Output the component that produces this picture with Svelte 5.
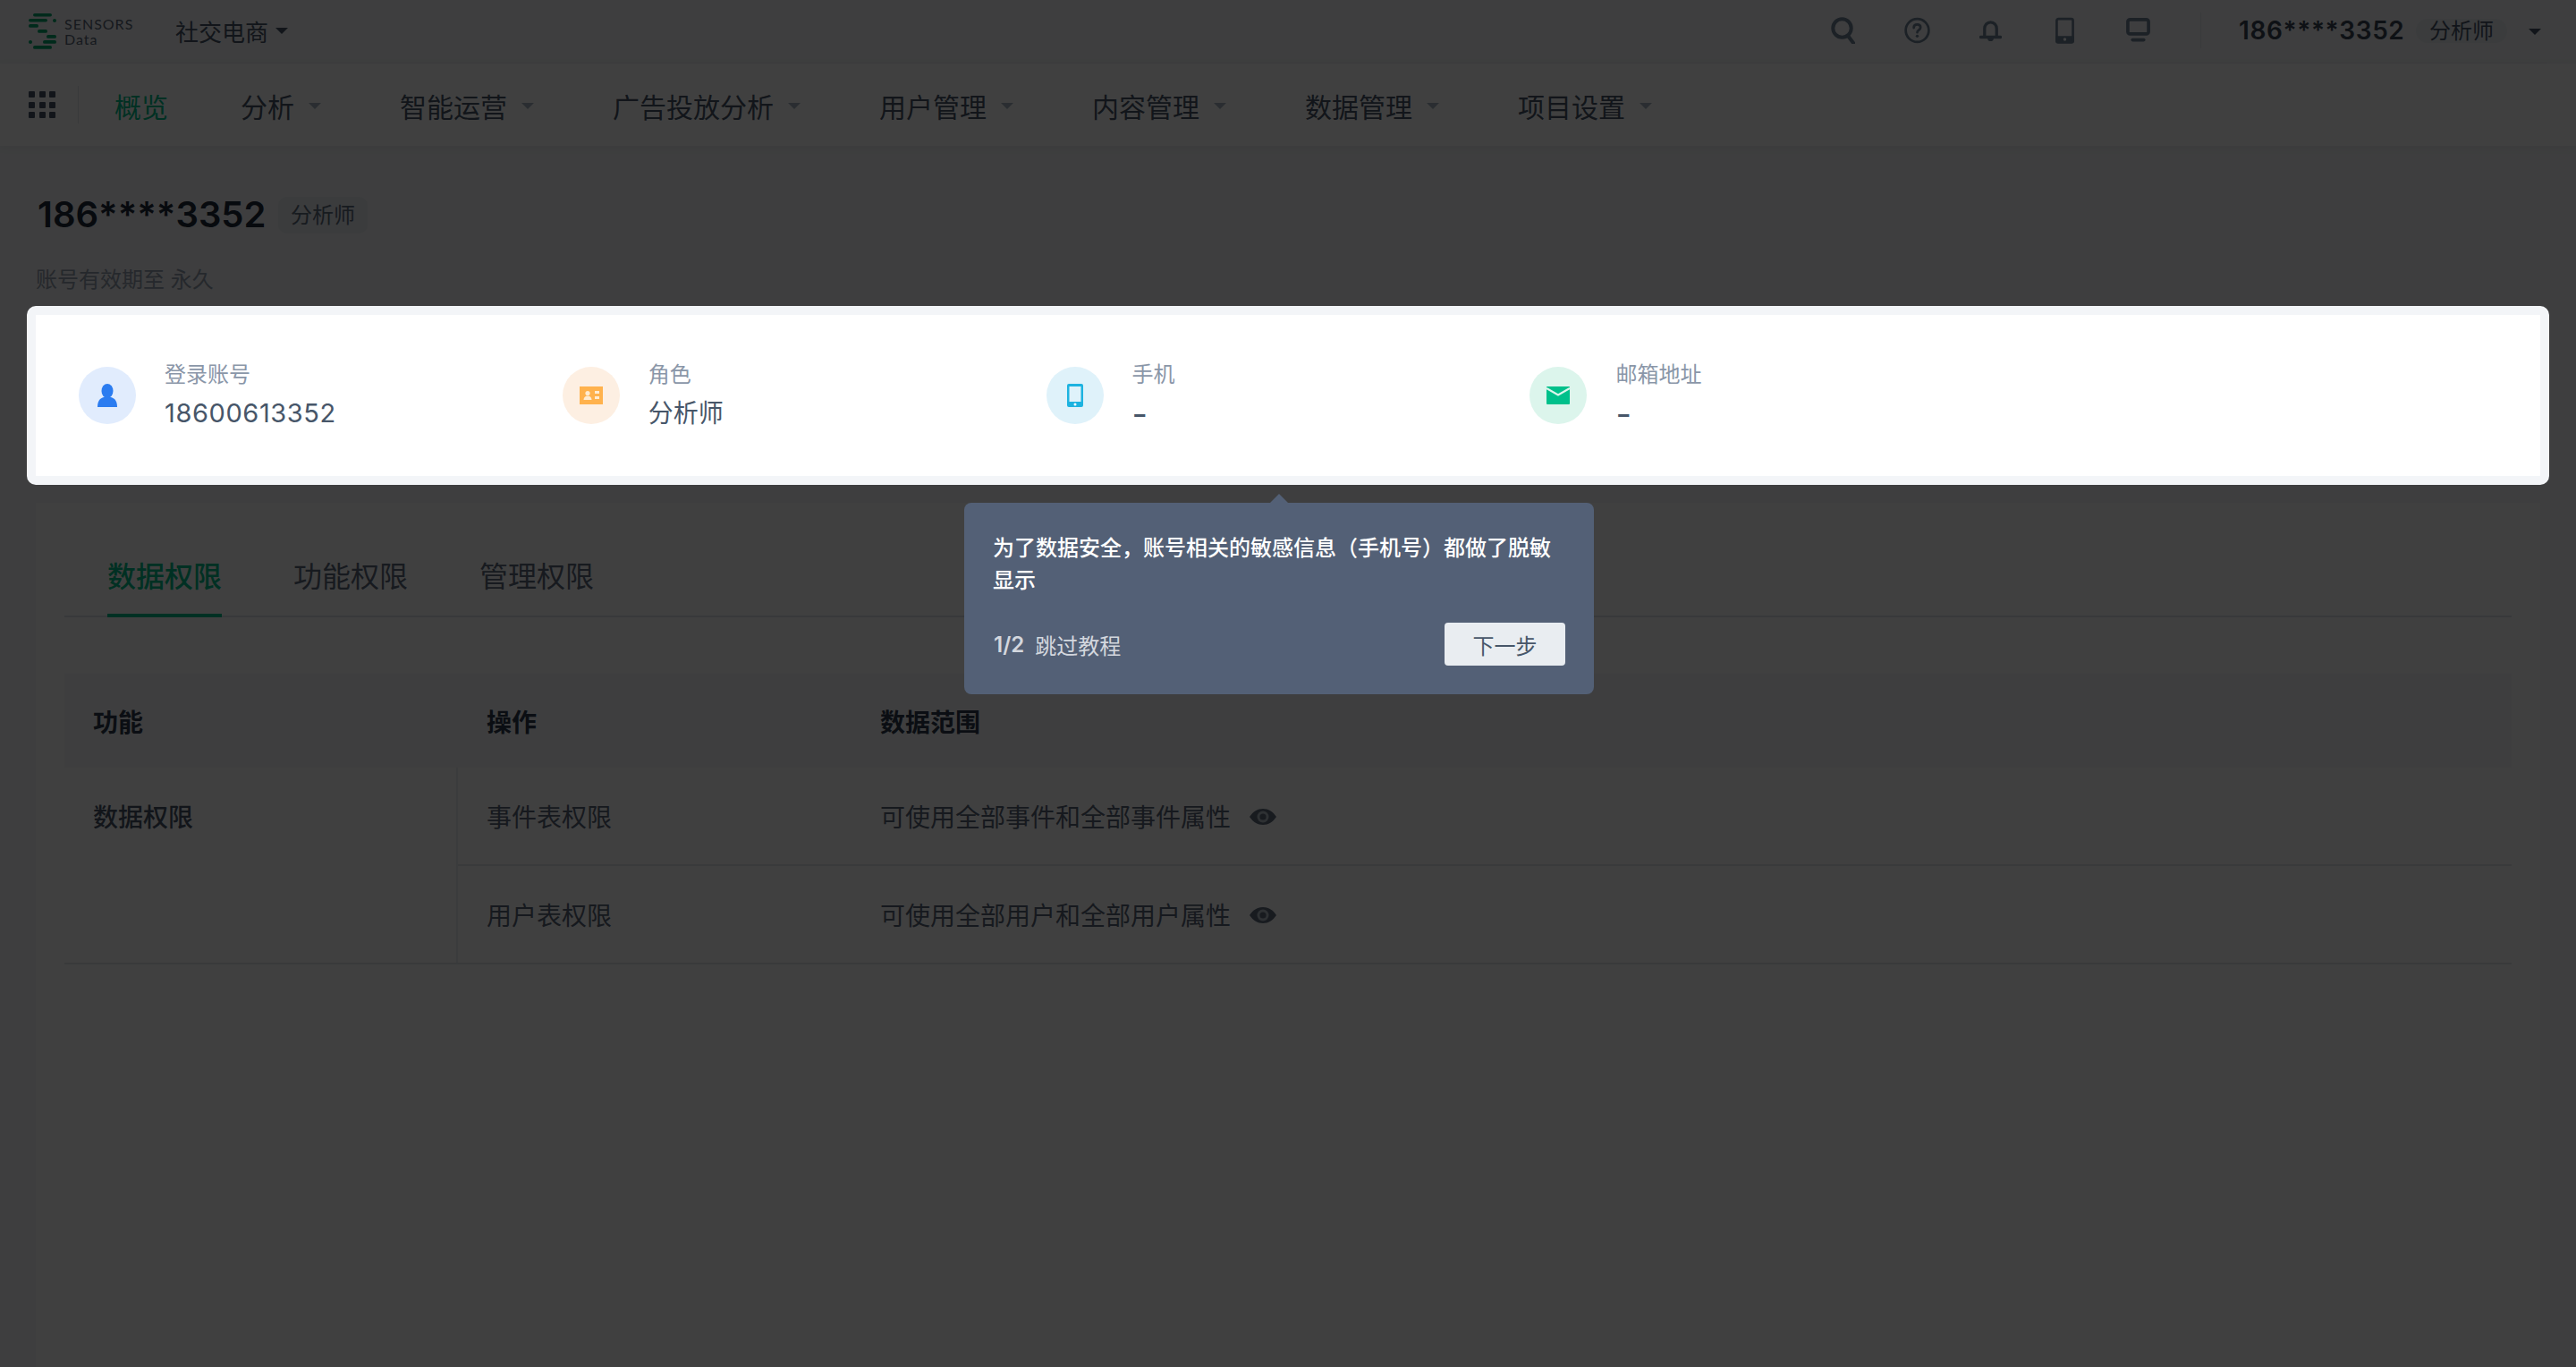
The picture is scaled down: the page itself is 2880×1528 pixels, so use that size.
<script>
  const navItems = ['分析', '智能运营', '广告投放分析', '用户管理', '内容管理', '数据管理', '项目设置'];
  const infos = [
    { label: '登录账号', value: '18600613352', cls: 'blue', kind: 'user', vcls: 'num' },
    { label: '角色', value: '分析师', cls: 'orange', kind: 'card', vcls: '' },
    { label: '手机', value: '-', cls: 'cyan', kind: 'phone', vcls: 'dash' },
    { label: '邮箱地址', value: '-', cls: 'green', kind: 'mail', vcls: 'dash' }
  ];
  const rows = [
    { op: '事件表权限', scope: '可使用全部事件和全部事件属性' },
    { op: '用户表权限', scope: '可使用全部用户和全部用户属性' }
  ];
</script>

<div class="page">
  <header class="topbar">
    <div class="logo">
      <svg width="32" height="42" viewBox="32 14 32 42" class="mark">
        <g fill="#00a86b">
          <rect x="37" y="15" width="21" height="3.6" rx="1.8" />
          <rect x="32" y="21" width="21" height="3.6" rx="1.8" />
          <circle cx="61" cy="23" r="2" />
          <rect x="32" y="27" width="11" height="3.8" rx="1.9" />
          <rect x="42" y="33" width="11" height="3.8" rx="1.9" />
          <rect x="52" y="39" width="11" height="3.8" rx="1.9" />
          <rect x="48" y="45" width="15" height="3.8" rx="1.9" />
          <circle cx="34" cy="47" r="2" />
          <rect x="37" y="51" width="21" height="3.8" rx="1.9" />
        </g>
      </svg>
      <div class="logo-text"><span>SENSORS</span><span>Data</span></div>
    </div>
    <div class="project">社交电商<i class="caret dark"></i></div>
    <div class="spacer"></div>
    <div class="tools">
      <span class="slot"><svg width="27" height="30" viewBox="0 0 27 30" fill="none" stroke="currentColor" stroke-width="4">
        <circle cx="12.5" cy="12.5" r="10.200" /><path d="M19 21l6 8" stroke-linecap="round" />
      </svg></span>
      <span class="slot"><svg width="29" height="30" viewBox="0 0 30 30" fill="none" stroke="currentColor" stroke-width="2.800">
        <circle cx="15" cy="15" r="13.300" /><path d="M11 12c0-2.400 1.800-3.800 4-3.800s3.800 1.400 3.800 3.400c0 3-3.800 3-3.800 5.600" stroke-linecap="round" />
        <circle cx="15" cy="21.500" r="1.700" fill="currentColor" stroke="none" />
      </svg></span>
      <span class="slot"><svg width="25" height="26" viewBox="0 0 26 26" fill="none" stroke="currentColor" stroke-width="3.400">
        <path d="M6 20v-9c0-4.200 3-7.600 7-7.600s7 3.400 7 7.600v9" /><path d="M1.500 20.800h23" stroke-linecap="round" />
        <path d="M9.500 22h7a3.500 3.500 0 0 1-7 0z" fill="currentColor" stroke="none" />
      </svg></span>
      <span class="slot"><svg width="21" height="30" viewBox="0 0 22 30" fill="none" stroke="currentColor" stroke-width="2.800">
        <rect x="1.500" y="1.500" width="19" height="27" rx="2" />
        <path d="M1.500 23h19v4.500a1.500 1.500 0 0 1-1.500 1.500h-16a1.500 1.500 0 0 1-1.500-1.500z" fill="currentColor" />
        <circle cx="11" cy="25.500" r="1.800" fill="#fff" stroke="none" />
      </svg></span>
      <span class="slot"><svg width="27" height="27" viewBox="0 0 28 28" fill="none" stroke="currentColor" stroke-width="3.800">
        <rect x="2" y="2" width="24" height="16.500" rx="2.500" /><path d="M7.500 25.500h13" stroke-linecap="round" />
      </svg></span>
    </div>
    <div class="vline"></div>
    <div class="user">186****3352</div>
    <div class="tag small">分析师</div>
    <i class="caret dark end"></i>
  </header>

  <nav class="nav">
    <div class="apps">
      {#each Array(9) as _}<span></span>{/each}
    </div>
    <div class="nav-items">
      <span class="nav-home">概览</span>
      {#each navItems as item}
        <span class="nav-item">{item}<i class="caret soft"></i></span>
      {/each}
    </div>
  </nav>

  <main class="main">
    <section class="head">
      <div class="title-row">
        <h1>186****3352</h1>
        <span class="tag">分析师</span>
      </div>
      <p class="expire">账号有效期至 永久</p>
    </section>

    <div class="spot">
      <div class="info">
        {#each infos as info}
          <div class="info-item">
            <div class="bubble {info.cls}">
              {#if info.kind === 'user'}
                <svg width="24" height="26" viewBox="0 0 24 26"><ellipse cx="12" cy="8" rx="6.500" ry="8" fill="currentColor" /><path d="M1 26c0-7 3-10 7-11h8c4 1 7 4 7 11z" fill="currentColor" /></svg>
              {:else if info.kind === 'card'}
                <svg width="26" height="20" viewBox="0 0 26 20"><rect width="26" height="20" fill="currentColor" /><circle cx="9" cy="7.500" r="2.600" fill="#fff" fill-opacity=".75" /><path d="M4.500 15c0-3 2-4.500 4.500-4.500s4.500 1.500 4.500 4.500z" fill="#fff" fill-opacity=".75" /><rect x="17" y="5" width="5" height="3" fill="#fff" fill-opacity=".75" /><rect x="17" y="11" width="5" height="3" fill="#fff" fill-opacity=".75" /></svg>
              {:else if info.kind === 'phone'}
                <svg width="18" height="26" viewBox="0 0 18 26"><rect width="18" height="26" rx="2" fill="currentColor" /><rect x="2.500" y="3" width="13" height="17" fill="#dff2fa" /><circle cx="9" cy="23" r="1.500" fill="#fff" /></svg>
              {:else}
                <svg width="26" height="20" viewBox="0 0 26 20"><rect width="26" height="20" rx="1" fill="currentColor" /><path d="M0 2l13 7.500L26 2" fill="none" stroke="#dcf5ec" stroke-width="2.200" /></svg>
              {/if}
            </div>
            <div class="info-text">
              <div class="info-label">{info.label}</div>
              <div class="info-value {info.vcls}">{info.value}</div>
            </div>
          </div>
        {/each}
      </div>

      <div class="pop">
        <p>为了数据安全，账号相关的敏感信息（手机号）都做了脱敏显示</p>
        <div class="pop-foot">
          <span class="step"><b>1/2</b><span>跳过教程</span></span>
          <button>下一步</button>
        </div>
      </div>
    </div>

    <section class="card">
      <div class="tabs">
        <span class="tab active">数据权限</span>
        <span class="tab">功能权限</span>
        <span class="tab">管理权限</span>
      </div>
      <div class="table">
        <div class="thead">
          <div>功能</div><div>操作</div><div>数据范围</div>
        </div>
        <div class="tbody">
          <div class="group">数据权限</div>
          <div class="group-rows">
            {#each rows as row}
              <div class="row">
                <div>{row.op}</div>
                <div class="scope">
                  {row.scope}
                  <svg width="32" height="18" viewBox="0 0 32 18" class="eye">
                    <path d="M1 9C5 3 10 0 16 0s11 3 15 9c-4 6-9 9-15 9S5 15 1 9z" fill="currentColor" />
                    <circle cx="16" cy="9" r="6.500" fill="#b9c1cc" />
                    <circle cx="16" cy="9" r="3.600" fill="currentColor" />
                  </svg>
                </div>
              </div>
            {/each}
          </div>
        </div>
      </div>
    </section>
  </main>
</div>

<style>
  :global(body) {
    margin: 0;
    overflow: hidden;
    background: #fff;
  }
  .page {
    width: 2880px;
    height: 1528px;
    overflow: hidden;
    background: #f5f7f9;
    color: #475669;
    font-family: Inter, "Noto Sans CJK SC", sans-serif;
    display: flex;
    flex-direction: column;
  }
  .topbar {
    flex: none;
    height: 71px;
    margin: 0 32px;
    box-sizing: border-box;
    display: flex;
    align-items: center;
    border-bottom: 1px solid #ebeef2;
    position: relative;
  }
  .logo { display: flex; align-items: center; gap: 8px; width: 164px; }
  .mark { display: block; flex: none; }
  .logo-text {
    display: flex;
    flex-direction: column;
    font-family: Lato, sans-serif;
    font-size: 16px;
    line-height: 17px;
    letter-spacing: 1px;
    color: #5a6678;
  }
  .project { font-size: 26px; display: flex; align-items: center; gap: 8px; color: #475669; margin-top: -2px; }
  .caret {
    display: inline-block;
    width: 0;
    height: 0;
    border-left: 7px solid transparent;
    border-right: 7px solid transparent;
    border-top: 7px solid #475669;
  }
  .caret.soft { border-top-color: #a8b3c1; margin-left: 16px; }
  .caret.end { margin-left: 24px; margin-right: 7px; }
  .spacer { flex: 1; }
  .tools { display: flex; align-items: center; margin-top: -3px; color: #6f8298; }
  .slot { width: 82.500px; display: flex; justify-content: center; }
  .slot svg { display: block; }
  .vline { width: 1px; height: 40px; background: #e3e7ec; margin: -2px 42px 0 28px; }
  .user { width: 180px; font-size: 28px; font-weight: 600; letter-spacing: .6px; color: #3a4656; margin-top: -2px; white-space: nowrap; }
  .tag {
    background: #e9edf2;
    font-size: 24px;
    line-height: 41px;
    padding: 0 14px;
    border-radius: 10px;
    color: #5e6b7d;
  }
  .tag.small { margin-left: 18px; padding: 0 15px; line-height: 27px; border-radius: 14px; color: #475669; margin-top: -2px; }

  .nav {
    flex: none;
    height: 92px;
    padding: 0 32px;
    background: #fff;
    display: flex;
    align-items: center;
    box-shadow: 0 2px 8px rgba(90, 100, 120, .08);
    position: relative;
  }
  .apps {
    width: 30px;
    display: grid;
    grid-template-columns: repeat(3, 7px);
    grid-auto-rows: 7px;
    gap: 4.500px;
    padding-right: 25px;
    border-right: 1px solid #e3e7ec;
    align-content: center;
    height: 42px;
  }
  .apps span { background: #475669; border-radius: 1px; }
  .nav-items { display: flex; align-items: center; margin-left: 40px; margin-top: 2px; font-size: 30px; gap: 88px; }
  .nav-home { color: #00bf8a; margin-right: -7px; }
  .nav-item { display: flex; align-items: center; }

  .main { flex: 1; min-height: 0; display: flex; flex-direction: column; }
  .head { height: 179px; padding: 0 40px; box-sizing: border-box; }
  .title-row { display: flex; align-items: center; padding-top: 54px; }
  h1 {
    margin: 2px 0 0 2px;
    font-size: 40px;
    line-height: 42px;
    font-weight: 600;
    color: #1d2939;
    width: 251px;
    white-space: nowrap;
  }
  .tag:not(.small) { margin-left: 18px; margin-top: 2px; }
  .expire { margin: 36px 0 0; font-size: 24px; line-height: 32px; color: #95a0af; }

  .spot {
    flex: none;
    margin: 0 30px;
    padding: 10px;
    border-radius: 10px;
    background: #f3f5f8;
    position: relative;
    z-index: 5;
    box-shadow: 0 0 0 3200px rgba(0, 0, 0, .75);
  }
  .info {
    height: 180px;
    padding: 0 48px;
    background: #fff;
    display: grid;
    grid-template-columns: repeat(5, 1fr);
    align-items: center;
  }
  .info-item { display: flex; align-items: center; gap: 32px; }
  .bubble {
    flex: none;
    width: 64px;
    height: 64px;
    border-radius: 50%;
    display: flex;
    align-items: center;
    justify-content: center;
  }
  .bubble.blue { background: #e1ecfd; color: #2b7cf0; }
  .bubble.orange { background: #fdefe2; color: #ffb24d; }
  .bubble.cyan { background: #dff2fa; color: #1db3e0; }
  .bubble.green { background: #dcf5ec; color: #00c08b; }
  .info-text { display: flex; flex-direction: column; gap: 8px; margin-top: -2px; }
  .info-label { font-size: 24px; line-height: 34px; color: #8a96a8; }
  .info-value { font-size: 28px; line-height: 36px; color: #475669; }
  .info-value.num { font-size: 29px; letter-spacing: .6px; }
  .info-value.dash { font-size: 38px; }

  .pop {
    position: absolute;
    left: 1048px;
    top: calc(100% + 20px);
    width: 704px;
    height: 214px;
    box-sizing: border-box;
    padding: 33px 32px 0;
    background: #536076;
    border-radius: 8px;
    color: #fff;
  }
  .pop::before {
    content: "";
    position: absolute;
    left: 342px;
    top: -10px;
    border-left: 10px solid transparent;
    border-right: 10px solid transparent;
    border-bottom: 10px solid #536076;
  }
  .pop p { margin: 0; font-size: 24px; line-height: 36px; font-weight: 500; }
  .pop-foot { margin-top: 29px; display: flex; align-items: center; justify-content: space-between; }
  .step { font-size: 24px; color: #d3d7de; display: flex; align-items: center; gap: 12px; }
  .step b { font-weight: 600; margin-left: 1px; }
  button {
    width: 135px;
    height: 48px;
    border: 0;
    border-radius: 4px;
    background: #e9edf1;
    color: #475669;
    font: inherit;
    font-size: 24px;
    padding: 0;
  }

  .card {
    flex: 1;
    margin: 20px 40px 0;
    background: #fff;
    padding: 0 32px;
  }
  .tabs {
    height: 128px;
    box-sizing: border-box;
    display: flex;
    align-items: flex-end;
    gap: 80px;
    padding-left: 48px;
    border-bottom: 2px solid #dfe4ea;
  }
  .tab { font-size: 32px; line-height: 44px; padding-bottom: 19px; margin-bottom: -2px; border-bottom: 4px solid transparent; color: #5d6a7d; }
  .tab.active { color: #00bf8a; font-weight: 500; border-bottom-color: #00bf8a; }
  .table { margin-top: 63px; font-size: 28px; color: #5a6678; }
  .thead {
    height: 105px;
    background: #f5f7fa;
    display: grid;
    grid-template-columns: 440px 440px 1fr;
    align-items: center;
    font-weight: 600;
    color: #2e3a4b;
  }
  .thead div { padding-left: 32px; }
  .tbody { display: grid; grid-template-columns: 440px 1fr; border-bottom: 2px solid #e3e7ec; }
  .group { padding: 36px 32px; line-height: 40px; color: #475669; font-weight: 500; border-right: 2px solid #e9edf2; }
  .row { display: grid; grid-template-columns: 440px 1fr; height: 108px; align-items: center; }
  .row + .row { border-top: 2px solid #e3e7ec; }
  .row > div { padding-left: 32px; display: flex; align-items: center; }
  .eye { margin: 2px 0 0 20px; color: #5f6c7e; }
</style>
